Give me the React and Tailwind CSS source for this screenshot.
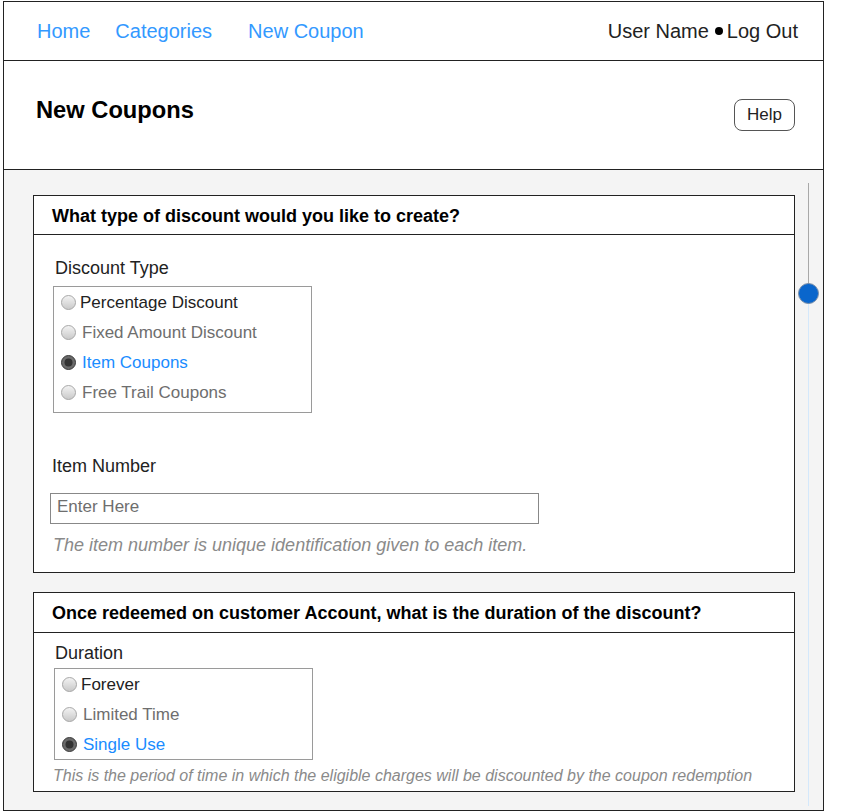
import React from 'react';

const font = { fontFamily: '"Liberation Sans", Arial, sans-serif' };

function Radio({ checked }) {
  return (
    <svg width="15" height="15" viewBox="0 0 15 15" className="shrink-0">
      <defs>
        <linearGradient id="rg" x1="0" y1="0" x2="0" y2="1">
          <stop offset="0" stopColor="#f4f4f4" />
          <stop offset="1" stopColor="#c8c8c8" />
        </linearGradient>
      </defs>
      {checked ? (
        <>
          <circle cx="7.5" cy="7.5" r="7" fill="#6a6a6a" stroke="#3a3a3a" />
          <circle cx="7.5" cy="7.5" r="4" fill="#333" />
        </>
      ) : (
        <circle cx="7.5" cy="7.5" r="7" fill="url(#rg)" stroke="#a8a8a8" />
      )}
    </svg>
  );
}

function RadioList({ items, className }) {
  return (
    <div className={'border border-[#9a9a9a] bg-white ' + className}>
      {items.map((it, i) => (
        <div key={it.label} className="flex h-[30px] items-center pl-[7px]">
          <Radio checked={it.state === 'on'} />
          <span
            className={
              'text-[17px] leading-none ' +
              (i === 0 ? 'ml-[4px] ' : 'ml-[6px] ') +
              (it.state === 'on'
                ? 'text-[#1a8cff]'
                : it.state === 'first'
                ? 'text-[#222]'
                : 'text-[#6e6e6e]')
            }
          >
            {it.label}
          </span>
        </div>
      ))}
    </div>
  );
}

export default function App() {
  return (
    <div className="h-[811px] w-[848px] overflow-hidden bg-white" style={font}>
      <div className="ml-[3px] mt-[1px] w-[821px] border border-[#222]">
        {/* Top nav */}
        <nav className="flex h-[59px] items-center border-b border-[#222] pl-[33px] pr-[25px] text-[20px]">
          <a className="text-[#3399ff]">Home</a>
          <a className="ml-[25px] text-[#3399ff]">Categories</a>
          <a className="ml-[36px] text-[#3399ff]">New Coupon</a>
          <div className="ml-auto flex items-center text-[#222]">
            <span>User Name</span>
            <span className="ml-[6px] mr-[4px] h-[8px] w-[8px] rounded-full bg-black" />
            <span>Log Out</span>
          </div>
        </nav>

        {/* Page header */}
        <header className="flex h-[109px] items-start justify-between border-b border-[#222] pl-[32px] pr-[28px]">
          <h1 className="mt-[32px] text-[23.7px] font-bold text-black">New Coupons</h1>
          <button className="mt-[38px] h-[32px] w-[61px] rounded-[8px] border border-[#555] bg-white text-[17px] text-[#222]">
            Help
          </button>
        </header>

        {/* Content */}
        <div className="flex h-[640px] bg-[#f4f4f4]">
          <div className="flex w-[791px] flex-col gap-[19px] pl-[29px] pt-[25px]">
            <section className="border border-[#222] bg-white">
              <div className="flex h-[39px] items-center border-b border-[#222] pl-[18px] pt-[2px] text-[18px] font-bold text-black">
                What type of discount would you like to create?
              </div>
              <div className="pb-[16px] pl-[16px] pr-[16px] pt-[23px]">
                <p className="ml-[5px] text-[18px] leading-[21px] text-[#222]">Discount Type</p>
                <RadioList
                  className="ml-[3px] mt-[7px] w-[259px] pb-[5px]"
                  items={[
                    { label: 'Percentage Discount', state: 'first' },
                    { label: 'Fixed Amount Discount', state: 'off' },
                    { label: 'Item Coupons', state: 'on' },
                    { label: 'Free Trail Coupons', state: 'off' },
                  ]}
                />
                <p className="ml-[2px] mt-[43px] text-[18px] leading-[21px] text-[#222]">Item Number</p>
                <input
                  placeholder="Enter Here"
                  className="mt-[16px] h-[31px] w-[489px] border border-[#888] bg-white px-[6px] pb-[4px] text-[17px] text-[#222] outline-none placeholder:text-[#6e6e6e]"
                />
                <p className="ml-[3px] mt-[11px] text-[18px] italic leading-[21px] text-[#8a8a8a]">
                  The item number is unique identification given to each item.
                </p>
              </div>
            </section>

            <section className="border border-[#222] bg-white">
              <div className="flex h-[40px] items-center border-b border-[#222] pl-[18px] pt-[2px] text-[18px] font-bold text-black">
                Once redeemed on customer Account, what is the duration of the discount?
              </div>
              <div className="pb-[5px] pl-[16px] pr-[16px] pt-[10px]">
                <p className="ml-[5px] text-[18px] leading-[21px] text-[#222]">Duration</p>
                <RadioList
                  className="ml-[4px] mt-[4px] w-[259px]"
                  items={[
                    { label: 'Forever', state: 'first' },
                    { label: 'Limited Time', state: 'off' },
                    { label: 'Single Use', state: 'on' },
                  ]}
                />
                <p className="ml-[3px] mt-[5px] text-[16px] italic leading-[21px] text-[#8a8a8a]">
                  This is the period of time in which the eligible charges will be discounted by the coupon redemption
                </p>
              </div>
            </section>
          </div>

          {/* Scrollbar */}
          <div className="relative flex-1">
            <div className="absolute left-[13px] top-[13px] h-[113px] w-px bg-[#a8a8a8]" />
            <div className="absolute left-[13px] top-[126px] h-[510px] w-px bg-[#d4e8fb]" />
            <div className="absolute left-[3px] top-[113px] h-[21px] w-[21px] rounded-full border border-[#7a8ea8] bg-[#0a66cc]" />
          </div>
        </div>
      </div>
    </div>
  );
}
